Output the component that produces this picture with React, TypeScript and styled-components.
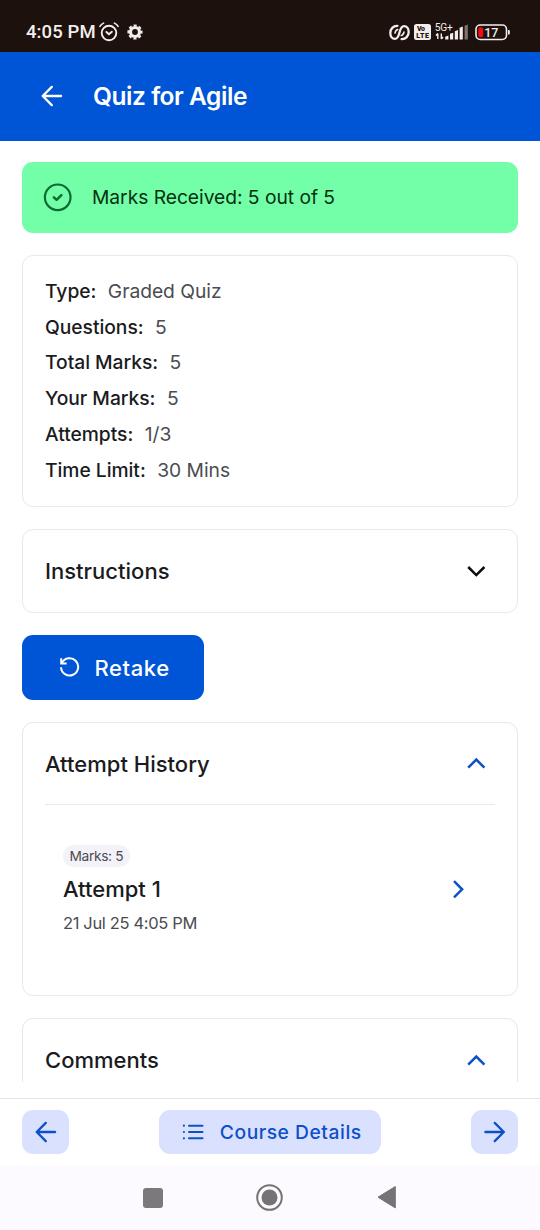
import React from "react";
import styled, { createGlobalStyle } from "styled-components";

const blue = "#0055d6";

const Global = createGlobalStyle`
  * { box-sizing: border-box; }
  body { margin: 0; background: #fff; font-family: Inter, "Liberation Sans", sans-serif; color: #1a1b1e; }
  svg { display: block; flex: none; }
  button { font: inherit; border: 0; padding: 0; cursor: pointer; }
  h1, h2, h3, p, dl, dt, dd { margin: 0; font-weight: inherit; }
`;

const Screen = styled.div`
  width: 540px;
  height: 1230px;
  display: flex;
  flex-direction: column;
  overflow: hidden;
  background: #fff;
`;

const StatusBar = styled.div`
  height: 52px;
  flex: none;
  display: flex;
  justify-content: space-between;
  align-items: flex-start;
  padding: 20px 29px 0 26px;
  background: #1c110d;
  color: #f3eeec;
`;

const StatusGroup = styled.div<{ $gap: number }>`
  display: flex;
  align-items: center;
  gap: ${(p) => p.$gap}px;
  height: 24px;
`;

const Clock = styled.span`
  font: 500 18.5px/26px Roboto, sans-serif;
  letter-spacing: 0.1px;
  width: 73px;
  white-space: nowrap;
`;

const TopBar = styled.header`
  height: 89px;
  flex: none;
  display: flex;
  align-items: center;
  padding: 0 0 1px 41px;
  gap: 30px;
  background: ${blue};
  color: #fff;
`;

const PageTitle = styled.h1`
  font-size: 24.5px;
  line-height: 30px;
  font-weight: 600;
  letter-spacing: -0.45px;
  white-space: nowrap;
`;

const Content = styled.main`
  height: 941px;
  flex: none;
  overflow: hidden;
  display: flex;
  flex-direction: column;
  align-items: stretch;
  gap: 22px;
  padding: 21px 22px 0;
  & > * { flex: none; }
`;

const Banner = styled.div`
  height: 71px;
  display: flex;
  align-items: center;
  gap: 19px;
  padding: 0 21px 1px;
  border-radius: 11px;
  background: #72ffa8;
  color: #06310f;
  font-size: 19.25px;
  letter-spacing: -0.04px;
  white-space: nowrap;
`;

const Card = styled.section<{ $height: number }>`
  height: ${(p) => p.$height}px;
  border: 1px solid #e9e9eb;
  border-radius: 11px;
  padding: 0 22px;
`;

const Facts = styled.dl`
  padding-top: 17.25px;
`;

const Fact = styled.div`
  display: flex;
  align-items: center;
  gap: 11.5px;
  height: 35.7px;
  font-size: 19.25px;
  letter-spacing: -0.03px;
  white-space: nowrap;
`;

const FactName = styled.dt`
  font-weight: 500;
`;

const FactValue = styled.dd`
  color: #4b4c51;
`;

const CardHeader = styled.div<{ $divided?: boolean }>`
  height: 82px;
  display: flex;
  align-items: center;
  justify-content: space-between;
  padding-right: 8px;
  border-bottom: ${(p) => (p.$divided ? "1.5px solid #e9e9eb" : "0")};
`;

const CardTitle = styled.h2`
  font-size: 22px;
  line-height: 28px;
  font-weight: 500;
  letter-spacing: 0.01px;
  white-space: nowrap;
`;

const RetakeButton = styled.button`
  width: 181.5px;
  height: 65px;
  display: flex;
  align-items: center;
  padding: 0 0 0 37px;
  gap: 14.5px;
  border-radius: 11px;
  background: ${blue};
  color: #fff;
  font-size: 22px;
  font-weight: 500;
  letter-spacing: 0.6px;
  white-space: nowrap;
`;

const Attempt = styled.div`
  display: flex;
  align-items: center;
  justify-content: space-between;
  padding: 40px 26px 0 18px;
`;

const AttemptText = styled.div`
  display: flex;
  flex-direction: column;
  align-items: flex-start;
  white-space: nowrap;
`;

const Badge = styled.span`
  height: 22px;
  padding: 0 6.5px;
  border-radius: 11px;
  background: #f3f2f8;
  color: #4b4c51;
  font-size: 13.75px;
  line-height: 22px;
  letter-spacing: -0.35px;
`;

const AttemptName = styled.h3`
  margin-top: 8px;
  font-size: 22px;
  line-height: 28px;
  font-weight: 500;
`;

const AttemptDate = styled.p`
  margin-top: 9px;
  color: #4b4c51;
  font-size: 16.5px;
  line-height: 22px;
  letter-spacing: -0.35px;
`;

const BottomBar = styled.nav`
  height: 67px;
  flex: none;
  margin-top: 16px;
  border-top: 1px solid #e4e4e6;
  display: flex;
  justify-content: space-between;
  align-items: flex-start;
  padding: 11px 22px 0;
`;

const TonalButton = styled.button<{ $width: number; $inset?: number }>`
  width: ${(p) => p.$width}px;
  height: 44px;
  display: flex;
  align-items: center;
  justify-content: center;
  gap: 15.5px;
  padding-left: ${(p) => p.$inset ?? 0}px;
  border-radius: 11px;
  background: #dae1ff;
  color: #0c50c8;
  font-size: 19.25px;
  font-weight: 500;
  letter-spacing: 0.53px;
  white-space: nowrap;
`;

const SystemBar = styled.div`
  height: 65px;
  flex: none;
  display: flex;
  align-items: center;
  justify-content: center;
  gap: 93px;
  padding: 0 1px 0 0;
  background: #fcfaff;
`;

const AlarmIcon = () => (
  <svg width="20" height="20" viewBox="0 0 20 20" fill="none" stroke="currentColor" strokeWidth="1.9" strokeLinecap="round" strokeLinejoin="round">
    <circle cx="10" cy="11" r="7.3" />
    <path d="M7.4 10 9.9 12.3 12.9 9.8" />
    <path d="M.9 4.4C1.8 2.9 3 1.9 4.6 1.1M19.1 4.4C18.2 2.9 17 1.9 15.4 1.1" strokeWidth="1.6" />
  </svg>
);

const GearIcon = () => (
  <svg width="16" height="16" viewBox="0 0 16 16" fill="none" stroke="currentColor">
    <circle cx="8" cy="8" r="4.5" strokeWidth="3.2" />
    <circle cx="8" cy="8" r="6.6" strokeWidth="2" strokeDasharray="3.1 2.084" strokeDashoffset="1.55" />
  </svg>
);

const LinkIcon = () => (
  <svg width="21" height="17" viewBox="0 0 21 17" fill="none" stroke="currentColor" strokeWidth="2.3" strokeLinecap="round">
    <path d="M8.4 1.9C4.200 1.700 1.300 5 1.300 9c0 3.500 1.900 5.900 4.700 5.900C11.800 14.900 9.200 2.100 15 2.100c2.800 0 4.700 2.400 4.700 5.900 0 4-2.900 7.300-7.100 7.100" />
    <path d="M8.700 5.500C7.200 5.900 6.300 7.300 6.100 9M12.300 11.500c1.500-.4 2.400-1.800 2.600-3.500" strokeWidth="1.700" />
  </svg>
);

const VolteIcon = () => (
  <svg width="17" height="16" viewBox="0 0 17 16">
    <rect width="17" height="16" rx="2.5" fill="currentColor" />
    <g fill="#1c110d" fontFamily="Roboto, sans-serif" fontWeight="900">
      <text x="3" y="7.3" fontSize="7" textLength="8">Vo</text>
      <text x="2.3" y="14" fontSize="7" textLength="12.5">LTE</text>
    </g>
  </svg>
);

const SignalIcon = () => (
  <svg width="35" height="20" viewBox="0 0 35 20" fill="currentColor" overflow="visible">
    <text x="-1.200" y="8.800" fontSize="10.200" fontFamily="Roboto, sans-serif" textLength="18">5G+</text>
    <path d="M1.800 11.500v5.500M0 13.500l1.800-2M5.300 11.500V17M7 15l-1.700 2" stroke="currentColor" strokeWidth="1.400" fill="none" />
    <path d="M9.200 14.700l3.200-1.200V17.500H9.200zM14 11.800l3.200-1v6.700H14zM18.800 9.300l3.200-1.300v9.500h-3.200zM23.600 5.800l3.200-1.300v13h-3.200z" />
    <path d="M28.600 3.800l3.200-1.300v15h-3.200z" opacity=".45" />
  </svg>
);

const BatteryIcon = () => (
  <svg width="36" height="17" viewBox="0 0 36 17">
    <rect x="1" y="1" width="30.5" height="14.5" rx="4.2" fill="none" stroke="currentColor" strokeWidth="1.6" />
    <rect x="3.2" y="3.2" width="5" height="10.1" rx="2" fill="#f00d0d" />
    <path d="M33 6h.6c.8 0 1.2.6 1.2 1.200v2.200c0 .7-.4 1.200-1.200 1.200H33z" fill="currentColor" />
    <text x="9.2" y="12.7" fontSize="12.5" fontWeight="500" fontFamily="Roboto, sans-serif" fill="currentColor">17</text>
  </svg>
);

const ArrowIcon = ({ right = false }: { right?: boolean }) => (
  <svg width="22" height="22" viewBox="0 0 22 22" fill="none" stroke="currentColor" strokeWidth="2.3" strokeLinecap="round" strokeLinejoin="round">
    {right ? <path d="M1.400 11h18.500M10.700 1.900 19.800 11l-9.100 9.100" /> : <path d="M20.100 11H1.700M10.800 1.900 1.700 11l9.100 9.100" />}
  </svg>
);

const CheckCircleIcon = () => (
  <svg width="30" height="30" viewBox="0 0 30 30" fill="none" stroke="#0c6b35" strokeWidth="2.2" strokeLinecap="round" strokeLinejoin="round">
    <circle cx="14.7" cy="15.3" r="12.8" />
    <path d="m10.900 15.300 2.700 2.500 4.800-4.600" strokeWidth="2.5" />
  </svg>
);

const chevrons = {
  down: "M2.200 6 10.300 14.100l8.100-8.100",
  up: "M2.200 14.700l8.100-8.100 8.100 8.100",
  right: "M6 2.200l8.100 8.100-8.100 8.100",
};

const Chevron = ({ to }: { to: keyof typeof chevrons }) => (
  <svg width="21" height="21" viewBox="0 0 21 21" fill="none" stroke={to === "down" ? "#0c0c0e" : "#0c50c8"} strokeWidth="2.5">
    <path d={chevrons[to]} />
  </svg>
);

const RetakeIcon = () => (
  <svg width="21" height="21" viewBox="0 0 21 21" fill="none" stroke="currentColor" strokeWidth="2">
    <path d="M2.200 1.200v5.200h5.400" />
    <path d="M2.900 6A8.600 8.600 0 1 1 2 10.300" />
  </svg>
);

const ListIcon = () => (
  <svg width="22" height="16" viewBox="0 0 22 16" fill="none" stroke="currentColor" strokeWidth="2" strokeLinecap="round">
    <path d="M7 1.700h13.500M7 8h13.500M7 14.300h13.500" />
    <path d="M1.900 1.700h.01M1.900 8h.01M1.900 14.300h.01" strokeWidth="2.2" />
  </svg>
);

const RecentsIcon = () => (
  <svg width="20" height="20" viewBox="0 0 20 20"><rect width="20" height="20" rx="3" fill="#7b797b" /></svg>
);

const HomeIcon = () => (
  <svg width="28" height="28" viewBox="0 0 28 28">
    <circle cx="13.500" cy="13.500" r="12.300" fill="none" stroke="#757375" strokeWidth="2" />
    <circle cx="13.500" cy="13.500" r="8" fill="#757375" />
  </svg>
);

const BackIcon = () => (
  <svg width="20" height="23" viewBox="0 0 20 23"><path d="M18.300.5v21.400L1 11.200z" fill="#757375" stroke="#757375" strokeLinejoin="round" /></svg>
);

const facts = [
  ["Type:", "Graded Quiz"],
  ["Questions:", "5"],
  ["Total Marks:", "5"],
  ["Your Marks:", "5"],
  ["Attempts:", "1/3"],
  ["Time Limit:", "30 Mins"],
];

export default function App() {
  return (
    <Screen>
      <Global />
      <StatusBar>
        <StatusGroup $gap={0}>
          <Clock>4:05 PM</Clock>
          <StatusGroup $gap={8}><AlarmIcon /><GearIcon /></StatusGroup>
        </StatusGroup>
        <StatusGroup $gap={4.5}>
          <LinkIcon /><VolteIcon /><SignalIcon /><BatteryIcon />
        </StatusGroup>
      </StatusBar>
      <TopBar>
        <ArrowIcon />
        <PageTitle>Quiz for Agile</PageTitle>
      </TopBar>
      <Content>
        <Banner><CheckCircleIcon />Marks Received: 5 out of 5</Banner>
        <Card $height={252}>
          <Facts>
            {facts.map(([name, value]) => (
              <Fact key={name}><FactName>{name}</FactName><FactValue>{value}</FactValue></Fact>
            ))}
          </Facts>
        </Card>
        <Card $height={84}>
          <CardHeader><CardTitle>Instructions</CardTitle><Chevron to="down" /></CardHeader>
        </Card>
        <RetakeButton><RetakeIcon />Retake</RetakeButton>
        <Card $height={274}>
          <CardHeader $divided><CardTitle>Attempt History</CardTitle><Chevron to="up" /></CardHeader>
          <Attempt>
            <AttemptText>
              <Badge>Marks: 5</Badge>
              <AttemptName>Attempt 1</AttemptName>
              <AttemptDate>21 Jul 25 4:05 PM</AttemptDate>
            </AttemptText>
            <Chevron to="right" />
          </Attempt>
        </Card>
        <Card $height={200}>
          <CardHeader><CardTitle>Comments</CardTitle><Chevron to="up" /></CardHeader>
        </Card>
      </Content>
      <BottomBar>
        <TonalButton $width={47}><ArrowIcon /></TonalButton>
        <TonalButton $width={222} $inset={4}><ListIcon />Course Details</TonalButton>
        <TonalButton $width={47}><ArrowIcon right /></TonalButton>
      </BottomBar>
      <SystemBar><RecentsIcon /><HomeIcon /><BackIcon /></SystemBar>
    </Screen>
  );
}
